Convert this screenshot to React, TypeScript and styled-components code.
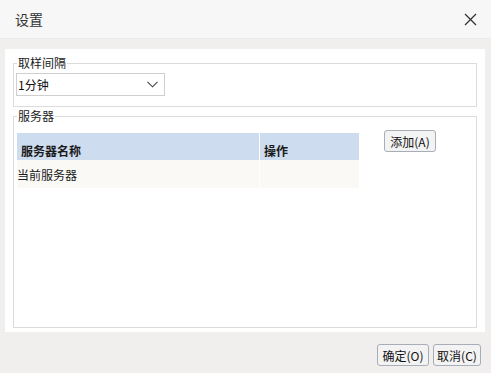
import React from "react";
import styled, { createGlobalStyle } from "styled-components";

const Global = createGlobalStyle`
  html, body { margin: 0; padding: 0; }
  body { font-family: "Noto Sans CJK SC", "Noto Sans", sans-serif; }
`;

const Dialog = styled.div`
  width: 491px;
  height: 373px;
  background: #f0efed;
  display: flex;
  flex-direction: column;
  overflow: hidden;
`;

const Header = styled.div`
  height: 39px;
  flex: none;
  background: #f7f7f7;
  border-bottom: 1px solid #ebebeb;
  box-sizing: border-box;
  display: flex;
  align-items: center;
  justify-content: space-between;
  padding: 0 13px 0 15px;
`;

const Title = styled.div`
  font-size: 14px;
  color: #333;
  line-height: 1;
`;

const CloseBtn = styled.button`
  border: none;
  background: transparent;
  padding: 0;
  width: 16px;
  height: 16px;
  display: flex;
  align-items: center;
  justify-content: center;
  cursor: pointer;
`;

const Body = styled.div`
  padding: 10px 6px 0 5px;
  height: 283px;
  flex: none;
`;

const Panel = styled.div`
  background: #fff;
  height: 283px;
  box-sizing: border-box;
  padding: 6px 8px 4px 8px;
  display: flex;
  flex-direction: column;
  gap: 1px;
`;

const Group = styled.fieldset<{ $grow?: boolean }>`
  margin: 0;
  border: 1px solid #dcdcdc;
  padding: 0 2px 10px 2px;
  min-width: 0;
  ${(p) => (p.$grow ? "flex: 1;" : "")}
`;

const Legend = styled.legend`
  font-size: 12px;
  color: #222;
  padding: 0 1px;
  margin-left: 1px;
  line-height: 16px;
`;

const Select = styled.div`
  width: 149px;
  height: 23px;
  box-sizing: border-box;
  border: 1px solid #cfcfcf;
  margin-top: 2px;
  display: flex;
  align-items: center;
  justify-content: space-between;
  padding: 0 6px 0 1px;
  font-size: 12px;
  color: #111;
`;

const ServerArea = styled.div`
  display: flex;
  align-items: flex-start;
  gap: 25px;
  padding: 9px 0 0 1px;
`;

const Table = styled.div`
  width: 342px;
`;

const Row = styled.div<{ $head?: boolean }>`
  display: grid;
  grid-template-columns: 242px 1px 99px;
  height: ${(p) => (p.$head ? 27 : 28)}px;
  background: ${(p) => (p.$head ? "#cddcee" : "#faf9f6")};
  font-size: 12px;
  font-weight: ${(p) => (p.$head ? 700 : 400)};
  color: #1a1a1a;
`;

const Cell = styled.div<{ $pad: number; $head?: boolean }>`
  display: flex;
  align-items: center;
  padding-left: ${(p) => p.$pad}px;
  padding-top: ${(p) => (p.$head ? 7 : 1)}px;
`;

const Sep = styled.div`
  background: #fff;
`;

const Btn = styled.button<{ $w: number }>`
  width: ${(p) => p.$w}px;
  height: 22px;
  box-sizing: border-box;
  border: 1px solid #a7aeb8;
  border-radius: 3px;
  background: #f3f3f3;
  font-family: "Noto Sans CJK SC", "Noto Sans", sans-serif;
  font-size: 12px;
  color: #111;
  padding: 0;
  display: flex;
  align-items: center;
  justify-content: center;
`;

const AddBtn = styled(Btn)`
  margin-top: -3px;
`;

const Footer = styled.div`
  flex: 1;
  display: flex;
  justify-content: flex-end;
  align-items: flex-start;
  gap: 4px;
  padding: 12px 10px 0 0;
`;

export default function App() {
  return (
    <>
      <Global />
      <Dialog>
        <Header>
          <Title>设置</Title>
          <CloseBtn aria-label="close">
            <svg width="13" height="13" viewBox="0 0 13 13">
              <path d="M1 1 L12 12 M12 1 L1 12" stroke="#333" strokeWidth="1.3" fill="none" />
            </svg>
          </CloseBtn>
        </Header>
        <Body>
          <Panel>
            <Group>
              <Legend>取样间隔</Legend>
              <Select>
                <span>1分钟</span>
                <svg width="11" height="7" viewBox="0 0 11 7">
                  <path d="M0.5 0.8 L5.5 5.8 L10.5 0.8" stroke="#444" strokeWidth="1.1" fill="none" />
                </svg>
              </Select>
            </Group>
            <Group $grow>
              <Legend>服务器</Legend>
              <ServerArea>
                <Table>
                  <Row $head>
                    <Cell $pad={4} $head>服务器名称</Cell>
                    <Sep />
                    <Cell $pad={4} $head>操作</Cell>
                  </Row>
                  <Row>
                    <Cell $pad={0}>当前服务器</Cell>
                    <Sep />
                    <Cell $pad={4}></Cell>
                  </Row>
                </Table>
                <AddBtn $w={52}>添加(A)</AddBtn>
              </ServerArea>
            </Group>
          </Panel>
        </Body>
        <Footer>
          <Btn $w={52}>确定(O)</Btn>
          <Btn $w={48}>取消(C)</Btn>
        </Footer>
      </Dialog>
    </>
  );
}
